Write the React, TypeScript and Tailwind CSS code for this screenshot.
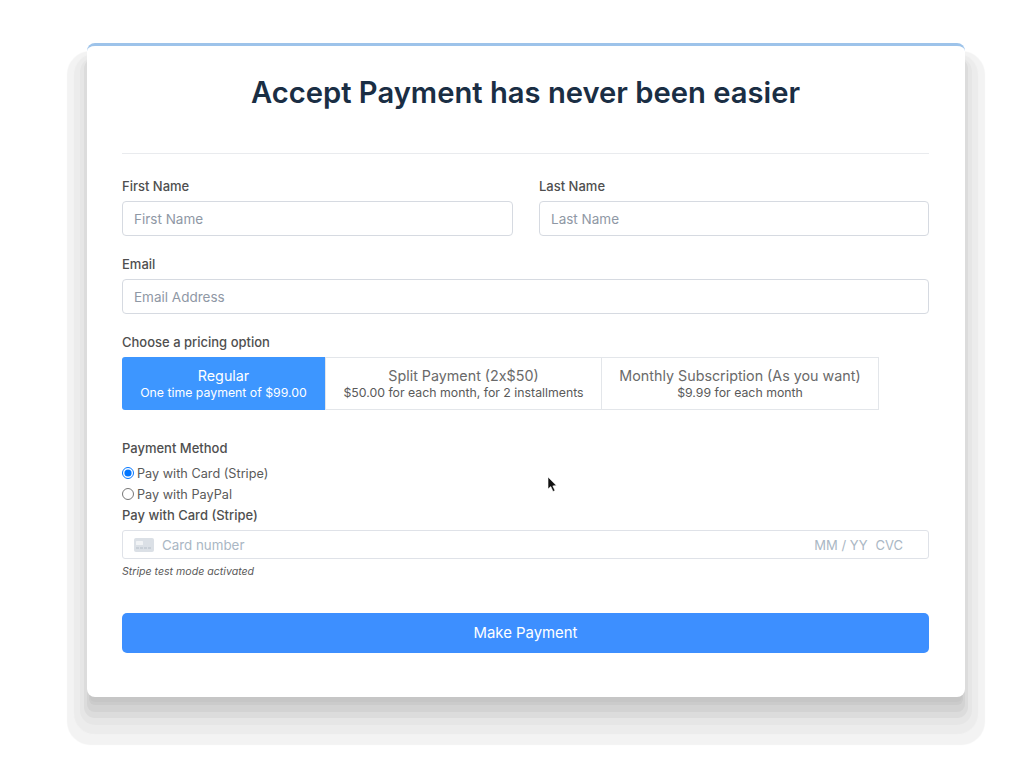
export default function App() {
  const options = [
    { title: "Regular", sub: "One time payment of $99.00", w: "w-[203px]", active: true },
    { title: "Split Payment (2x$50)", sub: "$50.00 for each month, for 2 installments", w: "w-[277px]", active: false },
    { title: "Monthly Subscription (As you want)", sub: "$9.99 for each month", w: "w-[278px] -ml-px", active: false },
  ];
  return (
    <div className="relative h-[770px] w-[1024px] overflow-hidden bg-white pt-[43px] pl-[87px] font-['Inter',sans-serif]">
      <div className="flex h-[654px] w-[878px] flex-col rounded-lg border-t-[3px] border-[#9dc3ea] bg-white pr-[36px] pl-[35px] shadow-[0_8px_0_-3px_#c6c6c6,0_10px_0_-2px_#cbcbcb,0_15px_0_0_#d3d3d3,0_18px_0_3px_#dcdcdc,0_21px_0_7px_#e6e6e6,0_24px_1px_13px_#ececec,0_28px_1px_20px_#f3f3f3]">
        <h1 className="mt-[29px] text-center text-[29.2px] leading-[36px] font-semibold text-[#1a2e44]">
          Accept Payment has never been easier
        </h1>
        <div className="mt-[42px] h-px bg-[#e9ebee]" />

        <div className="mt-[24px] grid grid-cols-[391px_390px] gap-x-[26px]">
          <Field label="First Name" placeholder="First Name" />
          <Field label="Last Name" placeholder="Last Name" />
        </div>
        <div className="mt-[20px]">
          <Field label="Email" placeholder="Email Address" />
        </div>

        <div className="mt-[20px] h-[16px] text-[13px] leading-[16px] font-medium text-[#4f4f4f]">Choose a pricing option</div>
        <div className="mt-[7px] flex h-[53px]">
          {options.map((o) =>
            o.active ? (
              <div key={o.title} className={`${o.w} flex flex-col items-center justify-center rounded-l-[3px] bg-[#3d96ff] text-white`}>
                <div className="text-[14.3px] leading-[19px]">{o.title}</div>
                <div className="text-[12.3px] leading-[16px]">{o.sub}</div>
              </div>
            ) : (
              <div key={o.title} className={`${o.w} flex flex-col items-center justify-center border border-[#e3e6ea] bg-white text-[#5a5a5a]`}>
                <div className="text-[14.3px] leading-[19px] text-[#6a6a6a]">{o.title}</div>
                <div className="text-[12.3px] leading-[16px]">{o.sub}</div>
              </div>
            ),
          )}
        </div>

        <div className="mt-[30px] h-[16px] text-[13px] leading-[16px] font-medium text-[#4f4f4f]">Payment Method</div>
        <div className="mt-[7px] flex flex-col text-[12.7px] leading-[21px] text-[#5a5a5a]">
          <label className="flex h-[21px] items-center gap-[3px]">
            <input type="radio" name="pay" defaultChecked className="m-0 mb-[2px] h-3 w-3" />
            Pay with Card (Stripe)
          </label>
          <label className="flex h-[21px] items-center gap-[3px]">
            <input type="radio" name="pay" className="m-0 mb-[2px] h-3 w-3" />
            Pay with PayPal
          </label>
        </div>
        <div className="mt-[2px] h-[16px] text-[13px] leading-[16px] font-medium text-[#4f4f4f]">Pay with Card (Stripe)</div>
        <div className="mt-[7px] flex h-[29px] items-center rounded-[3px] border border-[#dfe2e8] pt-[2px] pr-[25px] pl-[11px] text-[13.35px] text-[#aab7c4]">
          <svg width="20" height="14" viewBox="0 0 20 14" className="mr-[8px] mb-[2px]">
            <rect x="0" y="0" width="20" height="14" rx="2" fill="#dbe0e6" />
            <rect x="2" y="3" width="7" height="4" rx="0.5" fill="#f1f3f5" />
            <rect x="2" y="9.5" width="3" height="1" fill="#b6bec8" />
            <rect x="6" y="9.5" width="3" height="1" fill="#b6bec8" />
            <rect x="10" y="9.5" width="3" height="1" fill="#b6bec8" />
            <rect x="14" y="9.5" width="3" height="1" fill="#b6bec8" />
          </svg>
          <span>Card number</span>
          <span className="ml-auto text-[13px]">MM / YY</span>
          <span className="ml-[8px] text-[13px]">CVC</span>
        </div>
        <div className="mt-[7px] text-[10.6px] leading-[12px] text-[#5a5a5a] italic">Stripe test mode activated</div>
        <button className="mt-[35px] h-[40px] w-full rounded-[5px] bg-[#3d8fff] pt-[1px] text-center text-[14.9px] text-white">
          Make Payment
        </button>
      </div>
      <svg width="12" height="18" viewBox="0 0 12 18" className="absolute top-[476px] left-[547px]">
        <path d="M1 1 L1 13 L3.8 10.6 L6 15.5 L8 14.6 L5.8 9.9 L9.4 9.6 Z" fill="#111111" stroke="#ffffff" strokeWidth="0.6" />
      </svg>
    </div>
  );
}

function Field({ label, placeholder }: { label: string; placeholder: string }) {
  return (
    <div>
      <div className="h-[16px] text-[13px] leading-[16px] font-medium text-[#4f4f4f]">{label}</div>
      <input
        placeholder={placeholder}
        className="mt-[7px] block h-[35px] w-full rounded-[4px] border border-[#d6dae1] bg-white px-[11px] text-[13.5px] outline-none placeholder:text-[#8f98a5]"
      />
    </div>
  );
}
